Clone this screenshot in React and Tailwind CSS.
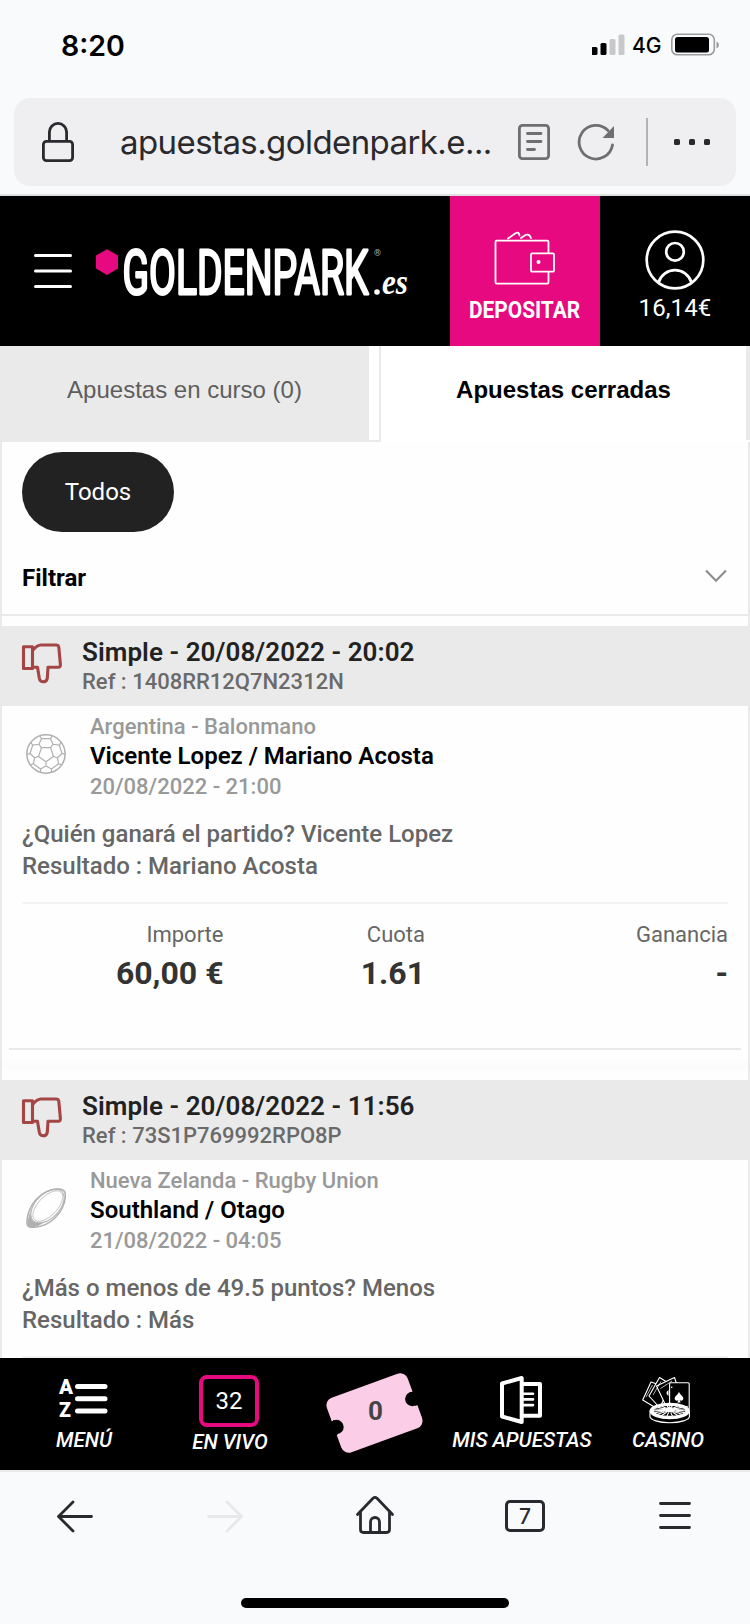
import React from "react";

const roboto = "font-['Roboto','Liberation_Sans',sans-serif]";

function StatusBar() {
  return (
    <div className="flex h-[98px] items-start justify-between pl-[61px] pr-[30px] font-['Inter',sans-serif] text-black">
      <span className="mt-[27.5px] text-[28.5px] font-semibold leading-9">8:20</span>
      <div className="mt-[32px] flex items-center">
        <svg width="34" height="24" viewBox="592 33 34 24">
          <rect x="591.5" y="47" width="6" height="8" rx="1.5" />
          <rect x="600.5" y="43" width="6" height="12" rx="1.5" />
          <rect x="609.5" y="39" width="6" height="16" rx="1.5" fill="#c8c8ca" />
          <rect x="618.5" y="34.5" width="6" height="20.5" rx="1.5" fill="#c8c8ca" />
        </svg>
        <span className="ml-[6px] mr-px mt-[2px] w-[30px] text-[21px] font-medium leading-6">4G</span>
        <svg className="ml-[7px]" width="50" height="24" viewBox="670 33 50 24">
          <rect x="671.8" y="34.3" width="42.5" height="20.5" rx="5.5" fill="none" stroke="#9c9c9e" strokeWidth="1.6" />
          <rect x="675" y="37" width="34" height="15.5" rx="2.5" />
          <path d="M716.5 41.5 Q719 42.5 719 45 Q719 47.5 716.5 48.5Z" fill="#9c9c9e" />
        </svg>
      </div>
    </div>
  );
}

function AddressBar() {
  return (
    <div className="border-b-2 border-[#dfe0e2] px-[14px] pb-[8px]">
      <div className="flex h-[88px] items-center rounded-[16px] bg-[#efeff1] pl-[26px]">
        <svg width="36" height="44" viewBox="40 120 36 44" fill="none" stroke="#2a292e" strokeWidth="2.8">
          <rect x="43.4" y="141.4" width="29.2" height="19.2" rx="3" />
          <path d="M49.4 141 V132 A8.6 8.6 0 0 1 66.6 132 V141" />
        </svg>
        <span className="ml-[44px] w-[376px] whitespace-nowrap font-['Inter',sans-serif] text-[33px] leading-10 tracking-[-0.58px] text-[#2a292e]">
          apuestas.goldenpark.e...
        </span>
        <svg className="ml-[21px]" width="34" height="38" viewBox="517 123 34 38" fill="none" stroke="#6f6f72" strokeWidth="2.8" strokeLinecap="round">
          <rect x="519.4" y="125.4" width="29.2" height="33.2" rx="3" />
          <path d="M527.5 133.5H541M527.5 141.5H541M527.5 149.5H534.5" />
        </svg>
        <svg className="ml-[25px]" width="40" height="40" viewBox="576 122 40 40" fill="none" stroke="#6f6f72" strokeWidth="2.8" strokeLinecap="round">
          <path d="M612.5 145 A16.8 16.8 0 1 1 608 130.5" />
          <path d="M614 126 V138 H602.5Z" fill="#6f6f72" stroke="none" />
        </svg>
        <div className="ml-[30px] h-[48px] w-[2px] bg-[#b3b3b6]" />
        <svg className="ml-[24px]" width="40" height="8" viewBox="672 139 40 8" fill="#2a292e">
          <rect x="674" y="140" width="6" height="6" rx="1.6" />
          <rect x="689" y="140" width="6" height="6" rx="1.6" />
          <rect x="704" y="140" width="6" height="6" rx="1.6" />
        </svg>
      </div>
    </div>
  );
}

function Logo() {
  return (
    <svg className="ml-[22px]" width="320" height="96" viewBox="94 223 320 96" fill="#fff">
      <path d="M107 249.2 L118 255.6 V268.4 L107 274.9 L96 268.4 V255.6Z" fill="#e6097f" />
      <text
        x="122.5"
        y="293.6"
        fontSize="61.5"
        fontWeight="400"
        stroke="#fff"
        strokeWidth="2.8"
        strokeLinejoin="round"
        textLength="246"
        lengthAdjust="spacingAndGlyphs"
        fontFamily="Roboto, sans-serif"
      >
        GOLDENPARK
      </text>
      <text x="374" y="256" fontSize="9" fill="#aaa" textLength="7" lengthAdjust="spacingAndGlyphs" fontFamily="Roboto, sans-serif">®</text>
      <circle cx="377" cy="292" r="2.8" />
      <text x="382" y="293.5" fontSize="35" fontStyle="italic" fontWeight="700" textLength="26" lengthAdjust="spacingAndGlyphs" fontFamily="'Liberation Serif', serif">
        es
      </text>
    </svg>
  );
}

function SiteHeader() {
  return (
    <header className={`flex h-[150px] bg-black text-white ${roboto}`}>
      <div className="flex flex-1 items-center pl-[34px]">
        <svg width="38" height="40" viewBox="34 251 38 40" stroke="#fff" strokeWidth="3" strokeLinecap="round">
          <path d="M35.5 255.5H70.5M35.5 271H70.5M35.5 286.5H70.5" />
        </svg>
        <Logo />
      </div>
      <div className="flex w-[150px] flex-col items-center bg-[#e6097f] pt-[34px]">
        <svg width="64" height="58" viewBox="493.5 230 64 58" fill="none" stroke="#fff" strokeWidth="1.8" strokeLinecap="round" strokeLinejoin="round">
          <path d="M549 253 V242 Q549 240.7 547.7 240.7 H497.3 Q496 240.7 496 242 V282.3 Q496 283.6 497.3 283.6 H547.7 Q549 283.6 549 282.3 V272" />
          <rect x="531.5" y="253.3" width="23" height="18.4" rx="1.3" />
          <circle cx="539" cy="262" r="2" fill="#fff" stroke="none" />
          <path d="M508.5 238.5 L516 233.3 Q519.5 231.3 520 235.5 M521.5 238 L526 235 Q529.5 233.3 531.5 238" />
        </svg>
        <span className="mt-[8px] origin-center scale-x-[0.89] text-[23.5px] font-bold leading-7">DEPOSITAR</span>
      </div>
      <div className="flex w-[150px] flex-col items-center pt-[34px]">
        <svg width="60" height="60" viewBox="645 230 60 60" fill="none" stroke="#fff" strokeWidth="2.7">
          <circle cx="675" cy="260" r="28.3" />
          <circle cx="675" cy="251.8" r="8.8" />
          <path d="M658.5 282.5 A17.2 17.2 0 0 1 691.5 282.5" />
        </svg>
        <span className="mt-[4px] text-[24px] leading-[28px] tracking-[0.1px]">16,14€</span>
      </div>
    </header>
  );
}

function Tabs() {
  return (
    <div className="flex h-[96px] font-['Liberation_Sans',Arial,sans-serif] text-[24px]">
      <div className="w-[381px] border-b-2 border-[#eaeaea]">
        <div className="flex h-[94px]">
          <div className="flex w-[369px] justify-center bg-[#eaeaea] pt-[29px] leading-[30px] text-[#5e5e5e]">
            <span>Apuestas en curso (0)</span>
          </div>
          <div className="ml-[10px] w-[2px] bg-[#eaeaea]" />
        </div>
      </div>
      <div className="flex flex-1 justify-center pt-[29px] font-bold leading-[30px] text-black">
        <span>Apuestas cerradas</span>
      </div>
      <div className="h-[94px] w-[4px] bg-[#eaeaea]" />
    </div>
  );
}

function ThumbDown() {
  return (
    <svg className="mt-[16px]" width="42" height="42" viewBox="21 642 42 42" fill="none" stroke="#a44646" strokeWidth="3.1" strokeLinejoin="round">
      <path d="M23.5 646.7 H32.5 V668.5 H23.5Z" />
      <path d="M32.6 650.5 Q37 645 41 645 H56 Q58.4 645 58.8 647.2 L60.4 664.5 Q60.6 667.2 58.3 667.2 H48 L47.3 678.3 Q46.5 681.8 43.2 681.8 Q40 681.8 39.3 678.3 L37.5 667.2 H32.6" />
    </svg>
  );
}

function polar(angle, r) {
  const a = (angle * Math.PI) / 180;
  return `${(20 + r * Math.cos(a)).toFixed(2)} ${(20 + r * Math.sin(a)).toFixed(2)}`;
}

function HandballIcon() {
  const dirs = [-54, 18, 90, 162, 234];
  const seams = dirs
    .map(
      (d) =>
        `M${polar(d, 7.8)} L${polar(d + 72, 7.8)} M${polar(d, 7.8)} L${polar(d, 12)} ` +
        `M${polar(d - 17, 19)} L${polar(d - 20, 16)} L${polar(d, 12)} L${polar(d + 20, 16)} L${polar(d + 17, 19)} ` +
        `M${polar(d + 20, 16)} L${polar(d + 52, 16)}`
    )
    .join(" ");
  return (
    <svg width="40" height="40" viewBox="0 0 40 40" fill="none" stroke="#b0b0b0" strokeWidth="1.2">
      <circle cx="20" cy="20" r="19.2" strokeWidth="1.5" />
      <path d={seams} />
    </svg>
  );
}

function RugbyIcon() {
  return (
    <svg width="40" height="40" viewBox="26 1188 40 40" fill="none" stroke="#b0b0b0" strokeWidth="1.5">
      <path d="M26.9 1223 C27 1205 41 1189.5 58 1189 Q65.4 1189 65.4 1195 C65 1212 50 1227.2 33 1227.3 Q26.8 1227.5 26.9 1223Z" />
      <ellipse cx="47.5" cy="1206" rx="20.5" ry="12" strokeWidth="1" transform="rotate(-46 47.5 1206)" />
      <ellipse cx="47.8" cy="1206" rx="19" ry="9.6" strokeWidth="0.7" transform="rotate(-46 47.8 1206)" />
      <path d="M27.3 1222 L31 1208 Q29.5 1217 33 1221 Q37 1224 46 1221.5 L38 1226 Q31 1227.6 28 1226.5 Q26.8 1225.5 27.3 1222Z" fill="#b0b0b0" stroke="none" />
    </svg>
  );
}

function Figure({ label, value, width }) {
  return (
    <div className={`text-right ${width}`}>
      <div className="text-[22px] leading-[30px] text-[#666]">{label}</div>
      <div className="mt-px text-[32px] font-bold leading-[44px] text-[#333]">{value}</div>
    </div>
  );
}

function Bet({ title, reference, icon, league, match, date, pick, result, figures }) {
  return (
    <article className="h-[454px] shrink-0">
      <div className="flex h-[80px] bg-[#eaeaea] pl-[19px]">
        <ThumbDown />
        <div className="ml-[19px] whitespace-nowrap pt-[10px]">
          <div className="text-[26px] font-semibold leading-[32px] tracking-[0.07px] text-[#222]">{title}</div>
          <div className="text-[22px] font-medium leading-[28px] text-[#6a6a6a]">{reference}</div>
        </div>
      </div>
      <div className="flex whitespace-nowrap pl-[24px] pt-[6px]">
        <div className="pt-[22px]">{icon}</div>
        <div className="ml-[24px] font-medium text-[#999]">
          <div className="text-[22px] leading-[30px]">{league}</div>
          <div className="text-[24px] font-semibold leading-[28px] text-black">{match}</div>
          <div className="text-[22px] leading-[34px]">{date}</div>
        </div>
      </div>
      <div className="mt-[14px] whitespace-nowrap pl-[20px] text-[24px] font-medium leading-[32px] text-[#666]">
        <div>{pick}</div>
        <div>{result}</div>
      </div>
      <div className="mx-[20px] mt-[20px] h-[2px] bg-[#f3f3f3]" />
      {figures && (
        <>
          <div className="mx-[20px] flex pt-[16px]">
            <Figure label="Importe" value={figures.stake} width="w-[201.5px]" />
            <Figure label="Cuota" value={figures.odds} width="w-[201.5px]" />
            <Figure label="Ganancia" value={figures.gain} width="flex-1" />
          </div>
          <div className="mx-[7px] mt-[53px] h-[2px] bg-[#e9e9e9]" />
          <div className="mt-[10px] h-[10px] bg-[#fcfcfc]" />
        </>
      )}
    </article>
  );
}

function Bets() {
  return (
    <main className={`flex flex-1 flex-col overflow-hidden border-x-2 border-[#eaeaea] bg-[#fefefe] ${roboto}`}>
      <div className="ml-[20px] mt-[10px] flex h-[80px] w-[152px] shrink-0 items-center justify-center rounded-full bg-[#222] text-[24px] text-white">
        Todos
      </div>
      <div className="mb-[10px] flex h-[84px] shrink-0 items-start justify-between border-b-2 border-[#eaeaea] pl-[20px] pr-[20px]">
        <span className="mt-[34px] text-[24px] font-bold leading-[24px] text-black">Filtrar</span>
        <svg className="mt-[36px]" width="24" height="16" viewBox="0 0 24 16" fill="none" stroke="#8e8e8e" strokeWidth="2.2">
          <path d="M2 2.6 L12 12.8 L22 2.6" />
        </svg>
      </div>
      <Bet
        title="Simple - 20/08/2022 - 20:02"
        reference="Ref : 1408RR12Q7N2312N"
        icon={<HandballIcon />}
        league="Argentina - Balonmano"
        match="Vicente Lopez / Mariano Acosta"
        date="20/08/2022 - 21:00"
        pick="¿Quién ganará el partido? Vicente Lopez"
        result="Resultado : Mariano Acosta"
        figures={{ stake: "60,00 €", odds: "1.61", gain: "-" }}
      />
      <Bet
        title="Simple - 20/08/2022 - 11:56"
        reference="Ref : 73S1P769992RPO8P"
        icon={<RugbyIcon />}
        league="Nueva Zelanda - Rugby Union"
        match="Southland / Otago"
        date="21/08/2022 - 04:05"
        pick="¿Más o menos de 49.5 puntos? Menos"
        result="Resultado : Más"
      />
    </main>
  );
}

function MenuIcon() {
  return (
    <svg width="52" height="54" viewBox="58 1373 52 54" fill="#fff">
      <text x="59" y="1394.3" fontSize="19.5" fontWeight="900" textLength="14" lengthAdjust="spacingAndGlyphs" fontFamily="Roboto, sans-serif">A</text>
      <text x="59" y="1417" fontSize="19.5" fontWeight="900" fontFamily="Roboto, sans-serif">Z</text>
      <rect x="75" y="1384" width="32.5" height="5" rx="2.5" />
      <rect x="75" y="1396.3" width="32.5" height="5" rx="2.5" />
      <rect x="75" y="1408.6" width="32.5" height="5" rx="2.5" />
    </svg>
  );
}

function TicketIcon() {
  return (
    <svg width="104" height="90" viewBox="324 1368 104 90">
      <rect x="331.5" y="1384" width="86" height="58" rx="8" fill="#fccde7" transform="rotate(-20 374.5 1413)" />
      <circle cx="336.5" cy="1427" r="7.2" />
      <path d="M329 1424 L334 1438 L338 1434 L334 1420Z" />
      <circle cx="412.3" cy="1399" r="7.2" />
      <path d="M413 1392 L421 1390 L423 1403 L415 1406Z" />
      <text x="375.5" y="1420" fontSize="26" fontWeight="700" fill="#444" textAnchor="middle" fontFamily="Roboto, sans-serif">0</text>
    </svg>
  );
}

function BetsIcon() {
  return (
    <svg width="46" height="54" viewBox="499 1373 46 54" fill="none" stroke="#fff" strokeWidth="4" strokeLinejoin="round">
      <path d="M502 1383.5 L521.7 1378 V1422 L502 1416.5Z" />
      <path d="M523 1384 H540 V1415.8 H523" />
      <path d="M523 1393.7 H533 M523 1399.4 H533 M523 1405.1 H533" strokeWidth="2.6" strokeLinecap="round" />
    </svg>
  );
}

function CasinoIcon() {
  const spokes = Array.from({ length: 18 }, (_, i) => {
    const a = (i * 20 * Math.PI) / 180;
    return `M${669.7 + 6 * Math.cos(a)} ${1410.3 + 2.2 * Math.sin(a)} L${669.7 + 16 * Math.cos(a)} ${1410.8 + 5.4 * Math.sin(a)}`;
  }).join(" ");
  return (
    <svg width="52" height="54" viewBox="642 1373 52 54" fill="#000" stroke="#fff" strokeWidth="1.1" strokeLinejoin="round">
      <path d="M651 1382 L663 1386 L656 1408 L642.7 1400Z" />
      <path d="M659.5 1377.5 L670 1384 L660 1408 L649 1396Z" />
      <path d="M674.5 1377.5 L680 1394 L666 1406 L656.5 1386Z" />
      <path d="M646 1397 L652.5 1385 M653 1395 L661 1381.5 M660.5 1388.5 L672 1381" strokeWidth="0.7" />
      <rect x="669.6" y="1382.8" width="19.6" height="27" rx="1" />
      <path d="M668.5 1390 Q664.5 1393 668.5 1396Z" fill="#fff" stroke="none" />
      <path d="M679 1392 Q680 1394.3 682.4 1396.2 Q684.5 1399 682 1400.6 Q680.5 1401 679.6 1399.8 L680.6 1402.6 H677.4 L678.4 1399.8 Q677.5 1401 676 1400.6 Q673.5 1399 675.6 1396.2 Q678 1394.3 679 1392Z" fill="#fff" stroke="none" />
      <circle cx="671.7" cy="1387.3" r=".8" fill="#fff" stroke="none" />
      <circle cx="687" cy="1406.5" r=".8" fill="#fff" stroke="none" />
      <path d="M650 1411 V1416.5 A19.7 6.2 0 0 0 689.4 1416.5 V1411Z" />
      <ellipse cx="669.7" cy="1411" rx="19.6" ry="7.6" fill="#fff" />
      <ellipse cx="669.7" cy="1410.8" rx="16.2" ry="5.6" fill="#000" />
      <path d={spokes} strokeWidth="1.1" />
      <ellipse cx="669.7" cy="1409.8" rx="5.5" ry="2" fill="#fff" />
      <path d="M669.7 1409 V1403 M666 1405.5 H673.4" />
    </svg>
  );
}

function NavItem({ icon, label }) {
  return (
    <div className="flex flex-1 basis-0 flex-col items-center pt-[15px]">
      {icon}
      <span className="mt-[1px] whitespace-nowrap text-[20.6px] font-medium italic leading-[24px]">{label}</span>
    </div>
  );
}

function SiteNav() {
  return (
    <nav className={`flex h-[112px] bg-black pl-[11px] pr-[9px] text-white ${roboto}`}>
      <NavItem icon={<MenuIcon />} label="MENÚ" />
      <NavItem
        icon={
          <div className="mb-[2px] mr-[2px] mt-[2px] flex h-[52px] w-[60px] items-center justify-center rounded-[8px] border-4 border-[#e6097f] text-[24px]">
            32
          </div>
        }
        label="EN VIVO"
      />
      <div className="flex flex-1 basis-0 justify-center pt-[10px]">
        <TicketIcon />
      </div>
      <NavItem icon={<BetsIcon />} label="MIS APUESTAS" />
      <NavItem icon={<CasinoIcon />} label="CASINO" />
    </nav>
  );
}

function BrowserToolbar() {
  return (
    <div className="flex h-[154px] flex-col items-center border-t-2 border-[#e9eaec] bg-[#f9fafc]">
      <div className="grid w-full grid-cols-5 justify-items-center pt-[22px]">
        <svg width="44" height="44" viewBox="53 1494 44 44" fill="none" stroke="#2a292e" strokeWidth="2.8" strokeLinecap="round" strokeLinejoin="round">
          <path d="M91.5 1516.5H58.5M73 1502 L58.5 1516.5 L73 1531" />
        </svg>
        <svg width="44" height="44" viewBox="203 1494 44 44" fill="none" stroke="#e7e8ea" strokeWidth="2.8" strokeLinecap="round" strokeLinejoin="round">
          <path d="M208.5 1516.5H241.5M227 1502 L241.5 1516.5 L227 1531" />
        </svg>
        <svg width="44" height="44" viewBox="353 1494 44 44" fill="none" stroke="#2a292e" strokeWidth="2.8" strokeLinecap="round" strokeLinejoin="round">
          <path d="M357.5 1514.5 L373 1498.3 Q375 1496.5 377 1498.3 L392.5 1514.5" />
          <path d="M360.5 1512 V1529.5 Q360.5 1532.5 363.5 1532.5 H386.5 Q389.5 1532.5 389.5 1529.5 V1512" />
          <path d="M370.5 1532 V1522 A4.5 4.5 0 0 1 379.5 1522 V1532" />
        </svg>
        <div className="mt-[6px] flex h-[32px] w-[40px] items-center justify-center rounded-[5px] border-[3px] border-[#2a292e] font-['Inter',sans-serif] text-[21px] font-medium leading-none text-[#2a292e]">
          7
        </div>
        <svg width="44" height="44" viewBox="653 1494 44 44" stroke="#2a292e" strokeWidth="2.8" strokeLinecap="round">
          <path d="M660.5 1503.5H689.5M660.5 1515.5H689.5M660.5 1527.5H689.5" />
        </svg>
      </div>
      <div className="mt-[60px] h-[10px] w-[268px] rounded-full bg-black" />
    </div>
  );
}

export default function App() {
  return (
    <div className="flex h-[1624px] w-[750px] flex-col overflow-hidden bg-white">
      <div className="bg-[#f9fafc]">
        <StatusBar />
        <AddressBar />
      </div>
      <SiteHeader />
      <Tabs />
      <Bets />
      <SiteNav />
      <BrowserToolbar />
    </div>
  );
}
